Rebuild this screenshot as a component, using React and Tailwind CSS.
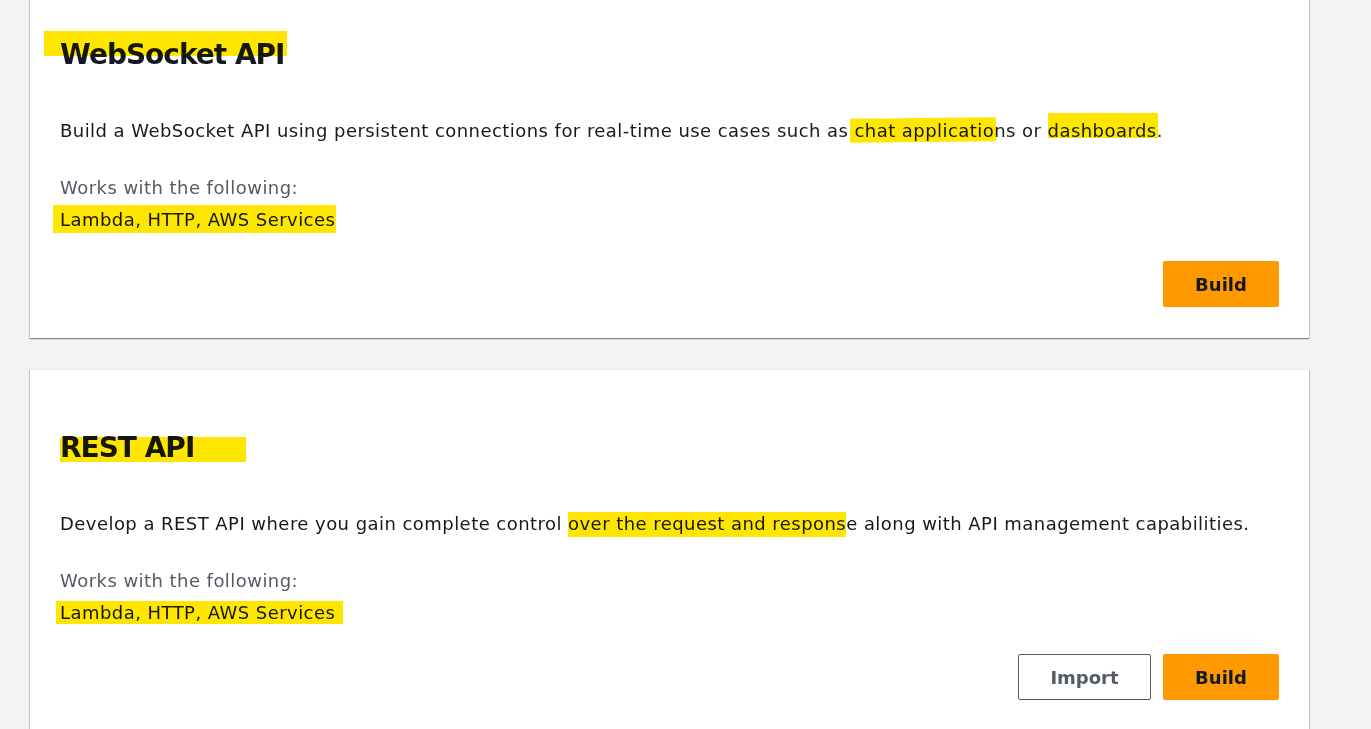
import React from 'react';

// yellow marker stroke laid over part of a line of text
function Mark({ children, box }) {
  return (
    <span className="relative">
      <span className={`absolute bg-[#ffe600] mix-blend-multiply ${box}`} />
      {children}
    </span>
  );
}

function Card({ title, body, works, actions, first }) {
  return (
    <section
      className={`bg-white border-t border-[#eaeded] shadow-[0_1px_1px_0_rgba(0,28,36,0.3),1px_1px_1px_0_rgba(0,28,36,0.15),-1px_1px_1px_0_rgba(0,28,36,0.15)] px-[30px] pt-[60px] pb-[31px] ${first ? '-mt-[24px]' : ''}`}
    >
      <h2 className="text-[28px] leading-[36px] font-bold tracking-[-1px] text-[#16191f]">{title}</h2>
      <p className="mt-[45px] text-[18px] leading-[26px] tracking-[0.45px] text-[#16191f]">{body}</p>
      <div className="mt-[28px] text-[18px] leading-[32px] tracking-[0.45px]">
        <div className="text-[#545b64]">Works with the following:</div>
        <div className="text-[#16191f]">{works}</div>
      </div>
      <div className="mt-[25px] flex justify-end gap-3">{actions}</div>
    </section>
  );
}

const btn = 'h-[46px] rounded-[2px] text-[18px] font-bold';

export default function App() {
  return (
    <div
      className="min-h-screen bg-[#f2f3f3] overflow-hidden"
      style={{ fontFamily: '"DejaVu Sans", "Noto Sans", Arial, sans-serif' }}
    >
      <div className="ml-[30px] w-[1279px] flex flex-col gap-[31px]">
        <Card
          first
          title={<Mark box="-left-[16px] -right-[2px] -top-[7px] bottom-[15px]">WebSocket API</Mark>}
          body={
            <>
              Build a WebSocket API using persistent connections for real-time use cases such as{' '}
              <Mark box="-left-[4px] -right-[2px] -top-[2px] -bottom-[1px] -rotate-[0.5deg]">chat applicatio</Mark>ns or{' '}
              <Mark box="left-0 -right-[1px] -top-[7px] bottom-[3px]">dashboards</Mark>.
            </>
          }
          works={<Mark box="-left-[7px] -right-[1px] -top-[4px] -bottom-[3px]">Lambda, HTTP, AWS Services</Mark>}
          actions={<button className={`${btn} w-[116px] bg-[#ff9900] text-[#16191f]`}>Build</button>}
        />
        <Card
          title={<Mark box="left-0 -right-[52px] top-[6px] bottom-[2px]">REST API</Mark>}
          body={
            <>
              Develop a REST API where you gain complete control{' '}
              <Mark box="left-0 -right-[0px] -top-[1px] -bottom-[3px]">over the request and respons</Mark>e along with API
              management capabilities.
            </>
          }
          works={<Mark box="-left-[4px] -right-[8px] -top-[1px] -bottom-[1px]">Lambda, HTTP, AWS Services</Mark>}
          actions={
            <>
              <button className={`${btn} w-[133px] bg-white border border-[#545b64] text-[#545b64]`}>Import</button>
              <button className={`${btn} w-[116px] bg-[#ff9900] text-[#16191f]`}>Build</button>
            </>
          }
        />
      </div>
    </div>
  );
}
